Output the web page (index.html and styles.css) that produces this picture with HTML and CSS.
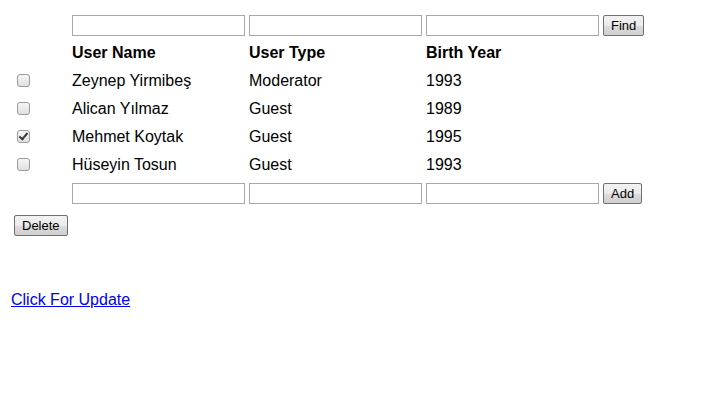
FILE: index.html
```html
<!DOCTYPE html>
<html>
<head>
<meta charset="utf-8">
<link rel="stylesheet" href="styles.css">
</head>
<body>
<div class="page">
  <table class="users">
    <tr class="input-row top">
      <td class="c-check"></td>
      <td><input type="text" class="field"></td>
      <td><input type="text" class="field"></td>
      <td><input type="text" class="field"></td>
      <td><button class="btn">Find</button></td>
    </tr>
    <tr class="head-row">
      <td class="c-check"></td>
      <th>User Name</th>
      <th>User Type</th>
      <th>Birth Year</th>
      <td></td>
    </tr>
    <tr class="data-row">
      <td class="c-check"><input type="checkbox" class="chk"></td>
      <td>Zeynep Yirmibeş</td>
      <td>Moderator</td>
      <td>1993</td>
      <td></td>
    </tr>
    <tr class="data-row">
      <td class="c-check"><input type="checkbox" class="chk"></td>
      <td>Alican Yılmaz</td>
      <td>Guest</td>
      <td>1989</td>
      <td></td>
    </tr>
    <tr class="data-row">
      <td class="c-check"><input type="checkbox" class="chk" checked></td>
      <td>Mehmet Koytak</td>
      <td>Guest</td>
      <td>1995</td>
      <td></td>
    </tr>
    <tr class="data-row">
      <td class="c-check"><input type="checkbox" class="chk"></td>
      <td>Hüseyin Tosun</td>
      <td>Guest</td>
      <td>1993</td>
      <td></td>
    </tr>
    <tr class="input-row bottom">
      <td class="c-check"></td>
      <td><input type="text" class="field"></td>
      <td><input type="text" class="field"></td>
      <td><input type="text" class="field"></td>
      <td><button class="btn">Add</button></td>
    </tr>
  </table>
  <div class="actions">
    <button class="btn">Delete</button>
  </div>
  <div class="link-line">
    <a href="#" class="update-link">Click For Update</a>
  </div>
</div>
</body>
</html>
```
FILE: styles.css
```css
html, body {
  margin: 0;
  padding: 0;
  background: #ffffff;
}
body {
  font-family: "Liberation Sans", Arial, sans-serif;
  font-size: 16px;
  color: #000000;
}
.page {
  padding-top: 12px;
}
.users {
  margin-left: 8px;
  border-collapse: separate;
  border-spacing: 0;
}
.users td, .users th {
  padding: 0 2px;
  vertical-align: middle;
  text-align: left;
  line-height: 18px;
  white-space: nowrap;
}
.users th {
  font-weight: bold;
}
.c-check {
  width: 58px;
}
.input-row.top td {
  height: 26px;
}
.head-row td, .head-row th {
  height: 26px;
  padding-top: 2px;
}
.data-row td {
  height: 26px;
  padding-top: 2px;
}
.data-row td.c-check {
  padding-top: 0;
  height: 28px;
}
.input-row.bottom td {
  height: 21px;
  padding-top: 5px;
  vertical-align: top;
}
.field {
  display: block;
  box-sizing: border-box;
  width: 173px;
  height: 21px;
  margin: 0;
  padding: 1px 2px;
  border: 1px solid #a9a9a9;
  background: #ffffff;
  font-family: "Liberation Sans", Arial, sans-serif;
  font-size: 13px;
  outline: none;
}
.btn {
  display: inline-block;
  box-sizing: border-box;
  height: 21px;
  margin: 0;
  padding: 0 7px;
  border: 1px solid #707070;
  border-radius: 2px;
  background: linear-gradient(#f2f2f2 0%, #ebebeb 50%, #dddddd 51%, #cfcfcf 100%);
  font-family: "Liberation Sans", Arial, sans-serif;
  font-size: 13px;
  line-height: 19px;
  color: #000000;
  vertical-align: top;
}
.chk {
  -webkit-appearance: none;
  appearance: none;
  display: block;
  box-sizing: border-box;
  width: 13px;
  height: 13px;
  margin: 0 0 0 7px;
  border: 1px solid #9a9a9a;
  border-radius: 3px;
  background: linear-gradient(#f6f6f6, #e0e0e0);
  position: relative;
}
.chk:checked::after {
  content: "";
  position: absolute;
  left: 3px;
  top: 0px;
  width: 3px;
  height: 7px;
  border: solid #3a3a3a;
  border-width: 0 2px 2px 0;
  transform: rotate(40deg);
}
.actions {
  margin-top: 11px;
  padding-left: 14px;
  line-height: 0;
}
.link-line {
  margin-top: 55px;
  padding-left: 11px;
  line-height: 18px;
}
.update-link {
  color: #0000ee;
  text-decoration: underline;
}
```
